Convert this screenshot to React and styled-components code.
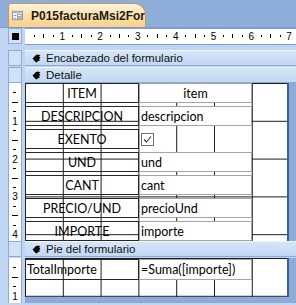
import React from "react";
import styled, { createGlobalStyle } from "styled-components";

const CM = 37.8;

const GlobalStyle = createGlobalStyle`
  html, body {
    margin: 0;
    padding: 0;
    background: #bfd5f1;
  }
  body {
    font-family: "Liberation Sans", Arial, sans-serif;
  }
`;

const Window = styled.div`
  width: 296px;
  height: 305px;
  overflow: hidden;
  background: #bfd5f1;
  display: flex;
  flex-direction: column;
`;

const TabStrip = styled.div`
  height: 28px;
  box-sizing: border-box;
  padding-left: 8px;
  display: flex;
  align-items: flex-end;
  background: #8fadd9;
  border-bottom: 1px solid #7b9bcc;
`;

const Tab = styled.div`
  width: 138px;
  height: 24px;
  box-sizing: border-box;
  display: flex;
  align-items: center;
  gap: 8px;
  padding-left: 3px;
  border: 1px solid #c39a5c;
  border-bottom: none;
  border-radius: 3px 12px 0 0;
  background: linear-gradient(#fff3da, #fde1ad 50%, #fbcf86);
  font: bold 12px "Liberation Sans", Arial, sans-serif;
  color: #1c1c1c;
  white-space: nowrap;
  overflow: hidden;
`;

const Band = styled.div`
  display: flex;
  gap: 3px;
  padding-left: 8px;
  height: ${(p) => p.$h}px;
  margin-top: ${(p) => p.$mt || 0}px;
  flex-shrink: 0;
`;

const SideBox = styled.div`
  width: 14px;
  flex-shrink: 0;
  box-sizing: border-box;
  background: #d2e2f6;
  border: 1px solid #8eaad6;
  display: flex;
  align-items: center;
  justify-content: center;
`;

const BlackSquare = styled.div`
  width: 7px;
  height: 7px;
  background: #000;
`;

const HRuler = styled.svg`
  flex: 1;
  height: 15px;
  background: #fff;
  border-top: 1px solid #7f9ecf;
  border-bottom: 1px solid #7f9ecf;
  font: 10px "Liberation Sans", Arial, sans-serif;
`;

const VRuler = styled.svg`
  width: 14px;
  flex-shrink: 0;
  background: #fff;
  border-left: 1px solid #8eaad6;
  border-right: 1px solid #8eaad6;
  box-sizing: border-box;
  font: 10px "Liberation Sans", Arial, sans-serif;
`;

const SectionBar = styled.div`
  flex: 1;
  box-sizing: border-box;
  display: flex;
  align-items: center;
  gap: 5px;
  padding-left: 7px;
  background: linear-gradient(#d5e5f8, #c2d7f2);
  border-top: 1px solid #f1f6fd;
  border-bottom: 1px solid #8eabd8;
  font: 11.5px "Liberation Sans", Arial, sans-serif;
  color: #111;
  white-space: nowrap;
  overflow: hidden;
`;

const Canvas = styled.div`
  flex: 1;
  background: #8eabd8;
  display: flex;
  align-items: flex-start;
`;

const FormArea = styled.div`
  width: 264px;
  height: ${(p) => p.$h}px;
  box-sizing: border-box;
  border-right: 2px solid #3d5e95;
  background-color: #fff;
  background-image: linear-gradient(to right, #1b1b1b 1px, transparent 1px),
    linear-gradient(to bottom, #1b1b1b 1px, transparent 1px);
  background-size: ${CM}px ${CM}px;
  display: flex;
  flex-direction: column;
  gap: 3px;
  padding-top: ${(p) => p.$pt || 0}px;
`;

const Row = styled.div`
  display: grid;
  grid-template-columns: 114px 113px;
  height: ${(p) => p.$h || 20}px;
`;

const Label = styled.div`
  box-sizing: border-box;
  border: 1px solid #262626;
  display: flex;
  align-items: center;
  justify-content: ${(p) => (p.$left ? "flex-start" : "center")};
  padding: 0 1px;
  font: 12.5px Lato, "Liberation Sans", sans-serif;
  color: #000;
  white-space: nowrap;
  overflow: hidden;
`;

const TextBox = styled.div`
  box-sizing: border-box;
  background: #fff;
  border: 1px solid #a4a4a4;
  display: flex;
  align-items: center;
  justify-content: ${(p) => (p.$center ? "center" : "flex-start")};
  padding: 0 1px;
  font: 12.5px Lato, "Liberation Sans", sans-serif;
  color: #000;
  white-space: nowrap;
  overflow: hidden;
`;

const CheckCell = styled.div`
  display: flex;
  align-items: center;
  padding-left: 2px;
`;

const CheckBox = styled.div`
  width: 13px;
  height: 13px;
  box-sizing: border-box;
  background: #fff;
  border: 1px solid #6f6f6f;
  display: flex;
  align-items: center;
  justify-content: center;
`;

function FormIcon() {
  return (
    <svg width="13" height="11" viewBox="0 0 13 11">
      <rect x="0.5" y="0.5" width="12" height="10" fill="#fff" stroke="#7a8797" />
      <rect x="1" y="1" width="11" height="2" fill="#a9b8cc" />
      <rect x="2" y="5" width="3" height="1" fill="#7a8797" />
      <rect x="6.5" y="4.5" width="4.5" height="2" fill="none" stroke="#7a8797" strokeWidth="0.8" />
      <rect x="2" y="8" width="3" height="1" fill="#7a8797" />
      <rect x="6.5" y="7.5" width="4.5" height="1.5" fill="none" stroke="#7a8797" strokeWidth="0.8" />
    </svg>
  );
}

function HandIcon() {
  return (
    <svg width="9" height="9" viewBox="0 0 9 9">
      <path d="M0.5 4.5 L4 1 L6 0.5 L8.5 1.5 L7 2.5 L8.5 4 L7 5 L8 6.5 L6 7 L5 8.5 L3.5 8 Z" fill="#000" />
    </svg>
  );
}

function Check() {
  return (
    <svg width="9" height="9" viewBox="0 0 9 9">
      <path d="M1 4.5 L3.5 7 L8 1.5" fill="none" stroke="#333" strokeWidth="1.1" />
    </svg>
  );
}

function HorizontalRuler() {
  const marks = [];
  for (let k = 1; k <= 28; k++) {
    const x = k * (CM / 4) - 0.5;
    if (k % 4 === 0) {
      marks.push(
        <text key={k} x={x} y="11" textAnchor="middle" fill="#000">
          {k / 4}
        </text>
      );
    } else if (k % 2 === 0) {
      marks.push(<rect key={k} x={Math.round(x)} y="5" width="1" height="4" fill="#000" />);
    } else {
      marks.push(<rect key={k} x={Math.round(x)} y="6" width="1" height="2" fill="#000" />);
    }
  }
  return <HRuler>{marks}</HRuler>;
}

function VerticalRuler({ height }) {
  const marks = [];
  const count = Math.floor((height - 6) / (CM / 4));
  for (let k = 1; k <= count; k++) {
    const y = k * (CM / 4);
    if (k % 4 === 0) {
      marks.push(
        <text key={k} x="6" y={y + 4} textAnchor="middle" fill="#000">
          {k / 4}
        </text>
      );
    } else if (k % 2 === 0) {
      marks.push(<rect key={k} x="3" y={Math.round(y)} width="6" height="1" fill="#000" />);
    } else {
      marks.push(<rect key={k} x="4" y={Math.round(y)} width="3" height="1" fill="#000" />);
    }
  }
  return <VRuler height={height}>{marks}</VRuler>;
}

const detailRows = [
  { label: "ITEM", value: "item", center: true },
  { label: "DESCRIPCION", value: "descripcion" },
  { label: "EXENTO", check: true },
  { label: "UND", value: "und" },
  { label: "CANT", value: "cant" },
  { label: "PRECIO/UND", value: "precioUnd" },
  { label: "IMPORTE", value: "importe" },
];

export default function App() {
  return (
    <>
      <GlobalStyle />
      <Window>
        <TabStrip>
          <Tab>
            <FormIcon />
            <span>P015facturaMsi2For</span>
          </Tab>
        </TabStrip>

        <Band $h={16} $mt={0}>
          <SideBox>
            <BlackSquare />
          </SideBox>
          <HorizontalRuler />
        </Band>

        <Band $h={16} $mt={6}>
          <SideBox />
          <SectionBar>
            <HandIcon />
            Encabezado del formulario
          </SectionBar>
        </Band>

        <Band $h={16} $mt={1}>
          <SideBox />
          <SectionBar>
            <HandIcon />
            Detalle
          </SectionBar>
        </Band>

        <Band $h={158}>
          <VerticalRuler height={158} />
          <Canvas>
            <FormArea $h={158}>
              {detailRows.map((r) => (
                <Row key={r.label}>
                  <Label>{r.label}</Label>
                  {r.check ? (
                    <CheckCell>
                      <CheckBox>
                        <Check />
                      </CheckBox>
                    </CheckCell>
                  ) : (
                    <TextBox $center={r.center}>{r.value}</TextBox>
                  )}
                </Row>
              ))}
            </FormArea>
          </Canvas>
        </Band>

        <Band $h={16}>
          <SideBox />
          <SectionBar>
            <HandIcon />
            Pie del formulario
          </SectionBar>
        </Band>

        <Band $h={45} $mt={1}>
          <VerticalRuler height={45} />
          <Canvas>
            <FormArea $h={39} $pt={1}>
              <Row $h={21}>
                <Label $left>TotalImporte</Label>
                <TextBox>=Suma([importe])</TextBox>
              </Row>
            </FormArea>
          </Canvas>
        </Band>
      </Window>
    </>
  );
}
